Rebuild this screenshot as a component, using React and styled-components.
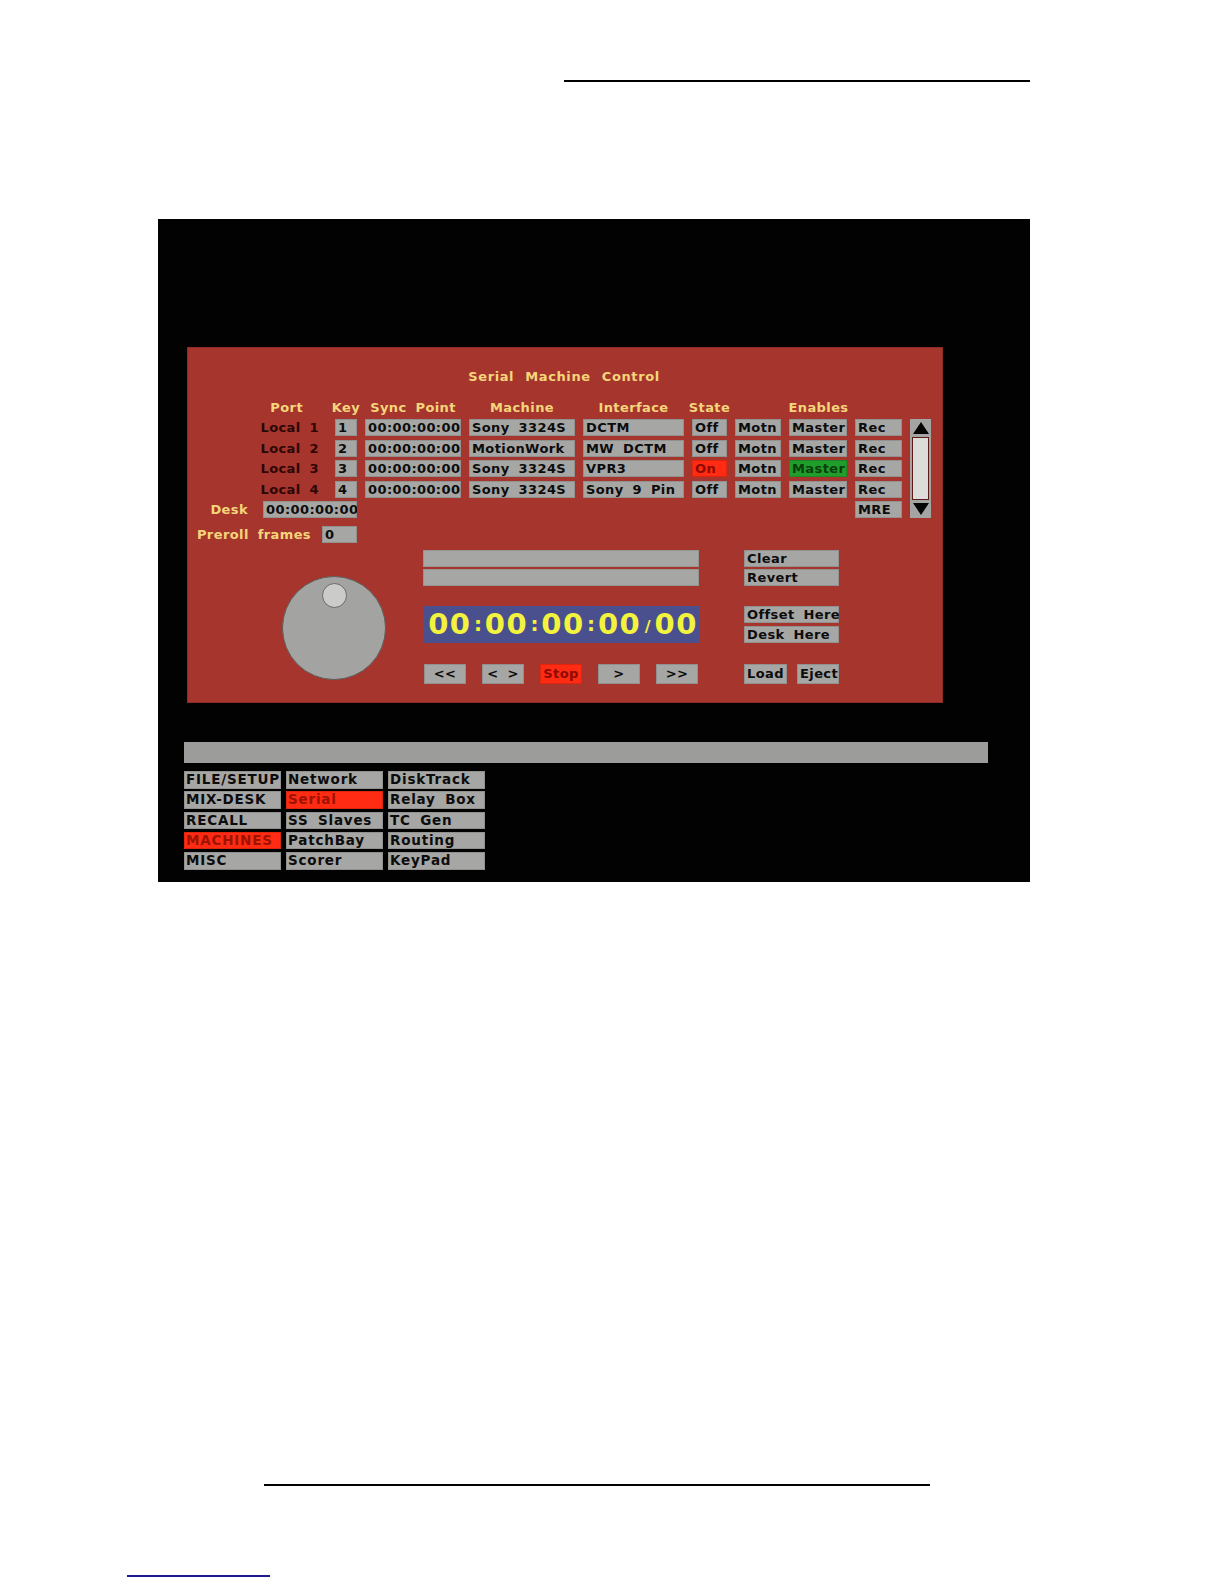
import React from "react";
import styled, { createGlobalStyle } from "styled-components";

const GlobalStyle = createGlobalStyle`
  html, body {
    margin: 0;
    padding: 0;
    background: #ffffff;
  }
  body {
    font-family: "DejaVu Sans", "Liberation Sans", sans-serif;
  }
`;

const Page = styled.div`
  width: 1224px;
  height: 1584px;
  padding-top: 80px;
  box-sizing: border-box;
  overflow: hidden;
`;

const Rule = styled.div`
  margin-left: ${(p) => p.$left}px;
  margin-top: ${(p) => p.$top || 0}px;
  width: ${(p) => p.$width}px;
  height: ${(p) => p.$thick || 2}px;
  background: ${(p) => p.$color || "#000"};
`;

const Screen = styled.div`
  margin-top: 137px;
  margin-left: 158px;
  width: 872px;
  height: 663px;
  box-sizing: border-box;
  padding: 128px 0 0 26px;
  background: #020202;
`;

const Panel = styled.div`
  margin-left: 3px;
  width: 756px;
  height: 356px;
  box-sizing: border-box;
  padding: 21px 11px 17px 9px;
  background: #a5352d;
  border: 1px solid #8c2c25;
  font-weight: 700;
  font-size: 13px;
  letter-spacing: 0.4px;
  word-spacing: 4px;
`;

const Title = styled.div`
  height: 16px;
  line-height: 16px;
  margin-bottom: 14px;
  text-align: center;
  color: #f4d57a;
  letter-spacing: 0.6px;
  word-spacing: 6px;
`;

const Table = styled.div`
  display: grid;
  grid-template-columns: 130px 22px 96px 106px 101px 35px 46px 58px 47px 21px;
  grid-template-rows: repeat(6, 17px);
  column-gap: 8px;
  row-gap: 3.4px;
`;

const Head = styled.div`
  grid-column: ${(p) => p.$col};
  line-height: 17px;
  color: #f4d57a;
  white-space: nowrap;
  text-align: ${(p) => p.$align || "center"};
  padding-right: ${(p) => p.$pad || 0}px;
  justify-self: ${(p) => (p.$align ? "stretch" : "center")};
`;

const PortLabel = styled.div`
  grid-column: 1;
  line-height: 17px;
  text-align: right;
  padding-right: 8px;
  color: #2c0706;
  white-space: nowrap;
`;

const tones = {
  grey: { bg: "#a6a6a4", fg: "#0c0c0c" },
  red: { bg: "#ff2b12", fg: "#8e0a00" },
  green: { bg: "#1f9e2c", fg: "#0b3f0b" },
};

const Cell = styled.div`
  height: ${(p) => p.$h || 17}px;
  line-height: ${(p) => p.$h || 17}px;
  box-sizing: border-box;
  padding: 0 3px;
  background: ${(p) => tones[p.$tone || "grey"].bg};
  color: ${(p) => tones[p.$tone || "grey"].fg};
  box-shadow: inset 0 0 0 1px rgba(0, 0, 0, 0.12);
  white-space: nowrap;
  overflow: hidden;
  text-align: ${(p) => p.$align || "left"};
  width: ${(p) => (p.$w ? `${p.$w}px` : "auto")};
  flex-shrink: 0;
`;

const LabelCell = styled.div`
  grid-column: 1 / 3;
  display: flex;
  justify-content: flex-end;
  align-items: center;
  gap: ${(p) => p.$gap}px;
`;

const YellowLabel = styled.span`
  color: #f4d57a;
  white-space: nowrap;
`;

const Scroll = styled.div`
  grid-column: 10;
  grid-row: 2 / 7;
  display: flex;
  flex-direction: column;
  background: #a4a4a2;
  padding: 0 2px;
`;

const Arrow = styled.div`
  height: 18px;
  display: flex;
  align-items: center;
  justify-content: center;
  &::before {
    content: "";
    width: 0;
    height: 0;
    border-left: 8px solid transparent;
    border-right: 8px solid transparent;
    ${(p) =>
      p.$down
        ? "border-top: 12px solid #050505;"
        : "border-bottom: 12px solid #050505;"}
  }
`;

const Track = styled.div`
  flex: 1;
  background: #5c1c18;
  padding: 1px 1px;
  display: flex;
`;

const Thumb = styled.div`
  flex: 1;
  background: #dcdcda;
`;

const Preroll = styled.div`
  width: 160px;
  margin-top: 8.5px;
  display: flex;
  justify-content: flex-end;
  align-items: center;
  gap: 11px;
`;

const Lower = styled.div`
  margin-top: 7px;
  display: flex;
  align-items: flex-start;
`;

const KnobCol = styled.div`
  width: 226px;
  flex-shrink: 0;
`;

const Knob = styled.div`
  position: relative;
  margin: 26px 0 0 85px;
  width: 104px;
  height: 104px;
  box-sizing: border-box;
  border-radius: 50%;
  background: #a3a3a1;
  border: 1.5px solid #5e5e5c;
`;

const KnobDot = styled.div`
  position: absolute;
  left: 39px;
  top: 6px;
  width: 25px;
  height: 25px;
  box-sizing: border-box;
  border-radius: 50%;
  background: #cbcbc9;
  border: 1.5px solid #6a6a68;
`;

const Column = styled.div`
  width: ${(p) => p.$w}px;
  margin-left: ${(p) => p.$ml || 0}px;
  flex-shrink: 0;
  display: flex;
  flex-direction: column;
`;

const Space = styled.div`
  height: ${(p) => p.$h}px;
  flex-shrink: 0;
`;

const Bar = styled.div`
  height: 17px;
  background: #a6a6a4;
  box-shadow: inset 0 0 0 1px rgba(0, 0, 0, 0.1);
`;

const Timecode = styled.div`
  height: 37px;
  background: #4a4f8d;
  display: flex;
  align-items: center;
  padding-left: 4px;
  color: #f3f33e;
`;

const Digits = styled.span`
  width: 46px;
  text-align: center;
  font-size: 29px;
  letter-spacing: 1.5px;
  line-height: 37px;
`;

const Sep = styled.span`
  width: ${(p) => p.$w || 11}px;
  text-align: center;
  font-size: ${(p) => (p.$slash ? 16 : 20)}px;
  line-height: 37px;
  ${(p) => p.$slash && "padding-top: 3px;"}
`;

const ButtonRow = styled.div`
  display: flex;
  justify-content: ${(p) => p.$justify || "space-between"};
  gap: ${(p) => p.$gap || 0}px;
  padding: 0 ${(p) => (p.$flush ? 0 : 1)}px;
`;

const StatusBar = styled.div`
  margin-top: 39px;
  width: 804px;
  height: 21px;
  background: #9c9c9a;
`;

const Menu = styled.div`
  margin-top: 8px;
  display: grid;
  grid-template-columns: repeat(3, 97px);
  grid-auto-rows: 17.5px;
  column-gap: 5px;
  row-gap: 2.8px;
  font-weight: 700;
  font-size: 13.5px;
  letter-spacing: 0.8px;
  word-spacing: 4px;
`;

const MenuItem = styled.div`
  line-height: 17.5px;
  padding: 0 2px;
  background: ${(p) => (p.$active ? "#ff2b12" : "#a6a6a4")};
  color: ${(p) => (p.$active ? "#a01200" : "#0c0c0c")};
  box-shadow: inset 0 0 0 1px rgba(0, 0, 0, 0.12);
  white-space: nowrap;
  overflow: hidden;
`;

const rows = [
  { port: "Local 1", key: "1", machine: "Sony 3324S", iface: "DCTM", state: "Off" },
  { port: "Local 2", key: "2", machine: "MotionWork", iface: "MW DCTM", state: "Off" },
  { port: "Local 3", key: "3", machine: "Sony 3324S", iface: "VPR3", state: "On", master: true },
  { port: "Local 4", key: "4", machine: "Sony 3324S", iface: "Sony 9 Pin", state: "Off" },
];

const menu = [
  ["FILE/SETUP", "Network", "DiskTrack"],
  ["MIX-DESK", "Serial", "Relay Box"],
  ["RECALL", "SS Slaves", "TC Gen"],
  ["MACHINES", "PatchBay", "Routing"],
  ["MISC", "Scorer", "KeyPad"],
];

const activeMenu = ["Serial", "MACHINES"];

const transport = ["<<", "< >", "Stop", ">", ">>"];

export default function App() {
  return (
    <>
      <GlobalStyle />
      <Page>
        <Rule $left={564} $width={466} />
        <Screen>
          <Panel>
            <Title>Serial Machine Control</Title>
            <Table>
              <Head $col={1} $align="right" $pad={24}>Port</Head>
              <Head $col={2}>Key</Head>
              <Head $col={3}>Sync Point</Head>
              <Head $col={4}>Machine</Head>
              <Head $col={5}>Interface</Head>
              <Head $col={6}>State</Head>
              <Head $col="7 / 10">Enables</Head>

              {rows.map((r) => (
                <React.Fragment key={r.port}>
                  <PortLabel>{r.port}</PortLabel>
                  <Cell>{r.key}</Cell>
                  <Cell>00:00:00:00</Cell>
                  <Cell>{r.machine}</Cell>
                  <Cell>{r.iface}</Cell>
                  <Cell $tone={r.state === "On" ? "red" : "grey"}>{r.state}</Cell>
                  <Cell>Motn</Cell>
                  <Cell $tone={r.master ? "green" : "grey"}>Master</Cell>
                  <Cell>Rec</Cell>
                </React.Fragment>
              ))}

              <LabelCell $gap={15}>
                <YellowLabel>Desk</YellowLabel>
                <Cell $w={94}>00:00:00:00</Cell>
              </LabelCell>
              <Cell style={{ gridColumn: 9, gridRow: 6 }}>MRE</Cell>

              <Scroll>
                <Arrow />
                <Track>
                  <Thumb />
                </Track>
                <Arrow $down />
              </Scroll>
            </Table>

            <Preroll>
              <YellowLabel>Preroll frames</YellowLabel>
              <Cell $w={35}>0</Cell>
            </Preroll>

            <Lower>
              <KnobCol>
                <Knob>
                  <KnobDot />
                </Knob>
              </KnobCol>

              <Column $w={276}>
                <Bar />
                <Space $h={2} />
                <Bar />
                <Space $h={20} />
                <Timecode>
                  <Digits>00</Digits>
                  <Sep>:</Sep>
                  <Digits>00</Digits>
                  <Sep>:</Sep>
                  <Digits>00</Digits>
                  <Sep>:</Sep>
                  <Digits>00</Digits>
                  <Sep $slash>/</Sep>
                  <Digits>00</Digits>
                </Timecode>
                <Space $h={21} />
                <ButtonRow>
                  {transport.map((t) => (
                    <Cell key={t} $w={42} $h={20} $align="center" $tone={t === "Stop" ? "red" : "grey"}>
                      {t}
                    </Cell>
                  ))}
                </ButtonRow>
              </Column>

              <Column $w={95} $ml={45}>
                <Cell>Clear</Cell>
                <Space $h={2} />
                <Cell>Revert</Cell>
                <Space $h={20} />
                <Cell>Offset Here</Cell>
                <Space $h={3} />
                <Cell>Desk Here</Cell>
                <Space $h={21} />
                <ButtonRow $justify="flex-start" $gap={10} $flush>
                  <Cell $w={43} $h={20}>Load</Cell>
                  <Cell $w={42} $h={20}>Eject</Cell>
                </ButtonRow>
              </Column>
            </Lower>
          </Panel>

          <StatusBar />

          <Menu>
            {menu.flat().map((m) => (
              <MenuItem key={m} $active={activeMenu.includes(m)}>
                {m}
              </MenuItem>
            ))}
          </Menu>
        </Screen>
        <Rule $left={264} $top={602} $width={666} />
        <Rule $left={127} $top={89} $width={143} $thick={1.5} $color="#1c1c8c" />
      </Page>
    </>
  );
}
